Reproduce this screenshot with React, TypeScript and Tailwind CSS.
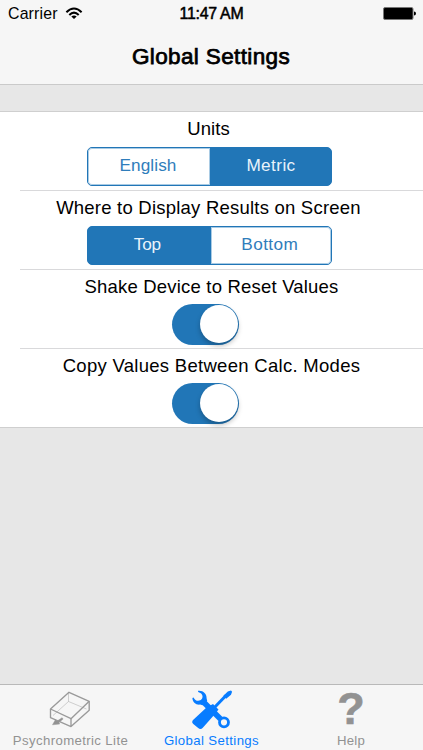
import type { ReactNode } from "react";

function Segmented({ options, selected }: { options: [string, string]; selected: number }) {
  return (
    <div className="mt-[7px] flex h-[39px] w-[245px] shrink-0 overflow-hidden rounded-[5px] border border-[#2176b7] bg-[#2176b7]">
      {options.map((option, i) => (
        <button
          key={option}
          className={
            "flex flex-1 items-center justify-center pb-[2px] text-[17.2px] " +
            (option === "Top"
              ? "pr-[4px] tracking-[-0.3px] "
              : option === "English"
                ? "rounded-l-[4px] pr-[2px] tracking-[0.1px] "
                : option === "Bottom"
                  ? "rounded-r-[4px] pr-[2px] tracking-[0.4px] "
                  : "pl-[1px] tracking-[0.4px] ") +
            (i === selected
              ? "bg-[#2176b7] text-[#e9f3fb]"
              : "bg-white text-[#2f7dbb] shadow-[inset_0_0_0_1px_#a9cbe4]")
          }
        >
          {option}
        </button>
      ))}
    </div>
  );
}

function Toggle() {
  return (
    <button
      role="switch"
      aria-checked="true"
      className="mt-[5.4px] mr-[8px] flex h-[41px] w-[67px] shrink-0 items-center justify-end rounded-full bg-[#2176b7] pr-[1.5px]"
    >
      <span className="block size-[38px] rounded-full bg-white shadow-[0_3px_5px_rgba(0,0,0,0.25)]" />
    </button>
  );
}

function Row({ label, labelClass, last, children }: { label: string; labelClass: string; last?: boolean; children: ReactNode }) {
  return (
    <section className="relative flex h-[79.2px] flex-col items-center pt-[5px] pr-[4px]">
      <h2 className={"h-[23px] text-[18.5px] whitespace-nowrap " + labelClass}>{label}</h2>
      {children}
      {!last && <div className="absolute right-0 bottom-[0.6px] left-[20px] h-px bg-[#d9d9db]" />}
    </section>
  );
}

function BoxIcon() {
  return (
    <svg viewBox="0 0 50 42" className="h-[42px] w-[50px]" fill="none" stroke="#9a9a9a" strokeWidth="1.35" strokeLinejoin="round">
      <path d="M5.5 21 24 4.3 44.2 13.3 26 30.7Z" />
      <path d="M5.5 21V29.7L26 38.6V30.7M26 38.6 44.2 22.3V13.3" />
      <path d="M23.5 4.5V13.5L8 27.5M23.5 13.5 41.5 21" strokeWidth=".8" opacity=".55" />
      <path d="m7.5 36.8 3-5.2 1.6 1.5 5-3.4 1 1.4-4.2 3.3.8 1.6Z" fill="#929292" strokeWidth=".5" />
    </svg>
  );
}

function ToolsIcon() {
  return (
    <svg viewBox="0 0 50 46" className="h-[46px] w-[50px]" fill="none" stroke="#087cff">
      <path d="M15 14.5 33.5 33" strokeWidth="5.6" />
      <circle cx="37" cy="36.3" r="4.5" strokeWidth="2.8" />
      <path
        d="M11 4.8c4.6-.8 8.9 2.8 8.6 7.4l.6 2.8-4.7 4.2-2.4-.6C9 19.2 5.4 16 5.4 12l1.2-.6c1 2.2 2.6 3.4 4.6 3.4 2.8 0 4.6-2 4.3-4.7-.2-2-1.9-3.3-4.3-4Z"
        fill="#087cff"
        stroke="none"
      />
      <path d="M25 24 39 9.5" strokeWidth="3" />
      <path d="m36.2 10 4.6-4.5 3.2-.9 1.1 1.2-1.1 3-4.8 4Z" fill="#087cff" stroke="none" />
      <path d="M19.5 21.5 26 18 31.5 23.5 28 28 15.8 41.8c-1.4 1.5-3.1 1.6-4.6.3l-4.9-4c-1.5-1.5-1.4-3 0-4.4Z" fill="#087cff" stroke="none" />
    </svg>
  );
}

export default function App() {
  return (
    <div className="flex h-[750px] w-[423px] flex-col overflow-hidden bg-[#e7e7e7] font-['Liberation_Sans',sans-serif] text-black">
      <header className="h-[85px] shrink-0 border-b border-[#cacaca] bg-[#f6f6f6]">
        <div className="grid h-[28px] grid-cols-3 items-center px-[8px] text-[15.9px]">
          <div className="flex items-center gap-[7px]">
            <span className="tracking-[0.15px]">Carrier</span>
            <svg viewBox="0 0 18 13" className="mb-px h-[13px] w-[18px]" fill="none" stroke="#000" strokeWidth="2">
              <path d="M1.4 5.2Q9-2.2 16.6 5.2M4.3 8Q9 3.3 13.7 8" />
              <path d="M6.3 9.4Q9 7.5 11.7 9.4L9 12.1Z" fill="#000" stroke="none" />
            </svg>
          </div>
          <span className="text-center tracking-[-0.25px] [-webkit-text-stroke:0.5px_#000]">11:47 AM</span>
          <svg viewBox="0 0 34 13" className="ml-auto mr-[-2px] mb-px h-[13px] w-[34px]">
            <rect x=".5" y=".5" width="29.5" height="12" rx="1.5" fill="#000" stroke="#777" />
            <path d="M31 4.5Q33 4.5 33 6.5 33 8.5 31 8.5Z" />
          </svg>
        </div>
        <h1 className="h-[56px] pr-[1px] text-center text-[22.5px] leading-[57px] tracking-[0.36px] [-webkit-text-stroke:0.75px_#000]">
          Global Settings
        </h1>
      </header>

      <main className="flex-1 pt-[26px]">
        <div className="h-[317px] border-y border-[#cfcfcf] bg-white">
          <Row label="Units" labelClass="pr-[2px] leading-[23px] tracking-[0.1px]">
            <Segmented options={["English", "Metric"]} selected={1} />
          </Row>
          <Row label="Where to Display Results on Screen" labelClass="pr-[2px] leading-[23px] tracking-[0.22px]">
            <Segmented options={["Top", "Bottom"]} selected={0} />
          </Row>
          <Row label="Shake Device to Reset Values" labelClass="pl-[4px] leading-[23px] tracking-[0.2px]">
            <Toggle />
          </Row>
          <Row label="Copy Values Between Calc. Modes" labelClass="pl-[4px] leading-[21px] tracking-[0.29px]" last>
            <Toggle />
          </Row>
        </div>
      </main>

      <nav className="grid h-[66px] shrink-0 grid-cols-3 border-t border-[#b9b9b9] bg-[#f6f6f6] text-[13.2px] tracking-[0.38px] text-[#929292]">
        <a className="flex flex-col items-center">
          <span className="flex h-[47px] items-center pr-[1px]"><BoxIcon /></span>
          <span className="leading-[18px]">Psychrometric Lite</span>
        </a>
        <a className="flex flex-col items-center text-[#087cff]">
          <span className="flex h-[47px] items-center pt-[1px]"><ToolsIcon /></span>
          <span className="leading-[18px]">Global Settings</span>
        </a>
        <a className="flex flex-col items-center pr-[3px]">
          <span className="h-[47px] text-[45px] leading-[48px] font-bold tracking-normal [-webkit-text-stroke:0.6px_#929292]">?</span>
          <span className="leading-[18px] tracking-[0.2px]">Help</span>
        </a>
      </nav>
    </div>
  );
}
